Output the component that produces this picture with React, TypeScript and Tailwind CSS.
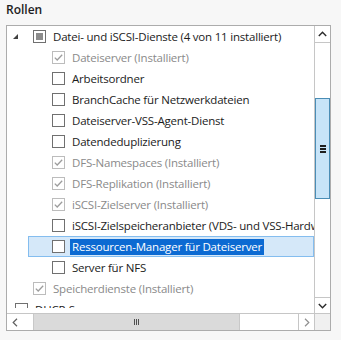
import React from "react";

type Row = {
  label: string;
  level: 0 | 1 | 2;
  state: "off" | "on" | "mixed";
  installed?: boolean;
  expander?: boolean;
  selected?: boolean;
};

const rows: Row[] = [
  { label: "Datei- und iSCSI-Dienste (4 von 11 installiert)", level: 1, state: "mixed", expander: true },
  { label: "Dateiserver (Installiert)", level: 2, state: "on", installed: true },
  { label: "Arbeitsordner", level: 2, state: "off" },
  { label: "BranchCache für Netzwerkdateien", level: 2, state: "off" },
  { label: "Dateiserver-VSS-Agent-Dienst", level: 2, state: "off" },
  { label: "Datendeduplizierung", level: 2, state: "off" },
  { label: "DFS-Namespaces (Installiert)", level: 2, state: "on", installed: true },
  { label: "DFS-Replikation (Installiert)", level: 2, state: "on", installed: true },
  { label: "iSCSI-Zielserver (Installiert)", level: 2, state: "on", installed: true },
  { label: "iSCSI-Zielspeicheranbieter (VDS- und VSS-Hardwareanbieter)", level: 2, state: "off" },
  { label: "Ressourcen-Manager für Dateiserver", level: 2, state: "off", selected: true },
  { label: "Server für NFS", level: 2, state: "off" },
  { label: "Speicherdienste (Installiert)", level: 1, state: "on", installed: true },
  { label: "DHCP-Server", level: 0, state: "off" },
];

function Checkbox({ state, disabled }: { state: Row["state"]; disabled?: boolean }) {
  const border = disabled ? "border-[#bcbcbc]" : "border-[#707070]";
  return (
    <span className={`flex h-[13px] w-[13px] shrink-0 items-center justify-center border bg-white ${border}`}>
      {state === "mixed" && <span className="h-[7px] w-[7px] bg-[#8c8c8c]" />}
      {state === "on" && (
        <svg width="11" height="11" viewBox="0 0 11 11" aria-hidden="true">
          <path d="M1.8 5.6 L4.2 8 L9.2 2.8" fill="none" stroke="#9c9c9c" strokeWidth="1.3" />
        </svg>
      )}
    </span>
  );
}

function Label({ row }: { row: Row }) {
  return (
    <span
      className={`ml-[5px] whitespace-nowrap px-[2px] leading-[16px] ${
        row.selected ? "bg-[#0c6ad2] text-white" : row.installed ? "text-[#8a8a8a]" : "text-[#1b1b1b]"
      }`}
    >
      {row.label}
    </span>
  );
}

function TreeRow({ row }: { row: Row }) {
  if (row.level === 2) {
    return (
      <div className="flex h-[21px] items-stretch">
        <span className="w-[21px] shrink-0" />
        <div
          className={`flex flex-1 items-center border ${
            row.selected ? "border-[#84bdef] bg-[#d5e8f9]" : "border-transparent"
          }`}
        >
          <span className="w-[23px] shrink-0" />
          <Checkbox state={row.state} disabled={row.installed} />
          <Label row={row} />
        </div>
      </div>
    );
  }

  return (
    <div className="flex h-[21px] items-center">
      <span className={`flex h-full shrink-0 items-center ${row.level === 0 ? "w-[8px]" : "w-[26px]"}`}>
        {row.expander && (
          <svg className="ml-[6px]" width="5" height="5" viewBox="0 0 5 5" aria-hidden="true">
            <polygon points="5,0 5,5 0,5" fill="#404040" />
          </svg>
        )}
      </span>
      <Checkbox state={row.state} disabled={row.installed} />
      <Label row={row} />
    </div>
  );
}

export default function App() {
  return (
    <div className="h-[340px] w-[341px] bg-[#f7f7f7] font-['Open_Sans',sans-serif]">
      <div className="flex h-[25px] items-start pl-[6px] pt-[1px] text-[12px] font-semibold text-[#1e1e1e]">
        Rollen
      </div>
      <div className="ml-[6px] flex h-[306px] w-[325px] flex-col border border-[#acacac] bg-white">
        <div className="flex min-h-0 flex-1">
          <div className="min-w-0 flex-1">
            <div className="h-[282px] overflow-hidden text-[11.5px] tracking-[-0.2px]">
              {rows.map((row) => (
                <TreeRow key={row.label} row={row} />
              ))}
            </div>
          </div>
          <div className="flex w-[16px] shrink-0 flex-col border-l border-[#c6c6c6]">
            <div className="flex h-[17px] shrink-0 items-center justify-center border-b border-[#c6c6c6]">
              <svg width="9" height="6" viewBox="0 0 9 6" aria-hidden="true">
                <path d="M0.8 5 L4.5 1.2 L8.2 5" fill="none" stroke="#2b2b2b" strokeWidth="1.4" />
              </svg>
            </div>
            <div className="h-[55px] shrink-0" />
            <div className="flex h-[101px] shrink-0 items-center justify-center border border-[#4a8db5] bg-[#c7e4f8]">
              <span className="flex flex-col gap-[1px]">
                <span className="h-[2px] w-[6px] bg-[#1e1e1e]" />
                <span className="h-[2px] w-[6px] bg-[#1e1e1e]" />
                <span className="h-[2px] w-[6px] bg-[#1e1e1e]" />
              </span>
            </div>
            <div className="flex-1" />
            <div className="flex h-[16px] shrink-0 items-center justify-center border-t border-[#c6c6c6]">
              <svg width="9" height="6" viewBox="0 0 9 6" aria-hidden="true">
                <path d="M0.8 1 L4.5 4.8 L8.2 1" fill="none" stroke="#2b2b2b" strokeWidth="1.4" />
              </svg>
            </div>
          </div>
        </div>
        <div className="flex h-[17px] shrink-0 border-t border-[#c6c6c6]">
          <div className="flex w-[16px] shrink-0 items-center justify-center">
            <svg width="6" height="9" viewBox="0 0 6 9" aria-hidden="true">
              <path d="M5 0.8 L1.2 4.5 L5 8.2" fill="none" stroke="#606060" strokeWidth="1.2" />
            </svg>
          </div>
          <div className="w-[10px] shrink-0" />
          <div className="flex w-[207px] shrink-0 items-center justify-center border-x border-[#c8c8c8] bg-[#dadada]">
            <span className="flex gap-[1px]">
              <span className="h-[6px] w-[1px] bg-[#505050]" />
              <span className="h-[6px] w-[1px] bg-[#505050]" />
              <span className="h-[6px] w-[1px] bg-[#505050]" />
            </span>
          </div>
          <div className="flex-1" />
          <div className="flex w-[16px] shrink-0 items-center justify-center border-l border-[#c6c6c6]">
            <svg width="6" height="9" viewBox="0 0 6 9" aria-hidden="true">
              <path d="M1 0.8 L4.8 4.5 L1 8.2" fill="none" stroke="#909090" strokeWidth="1.2" />
            </svg>
          </div>
          <div className="w-[16px] shrink-0 border-l border-[#c6c6c6] bg-[#f0f0f0]" />
        </div>
      </div>
    </div>
  );
}
